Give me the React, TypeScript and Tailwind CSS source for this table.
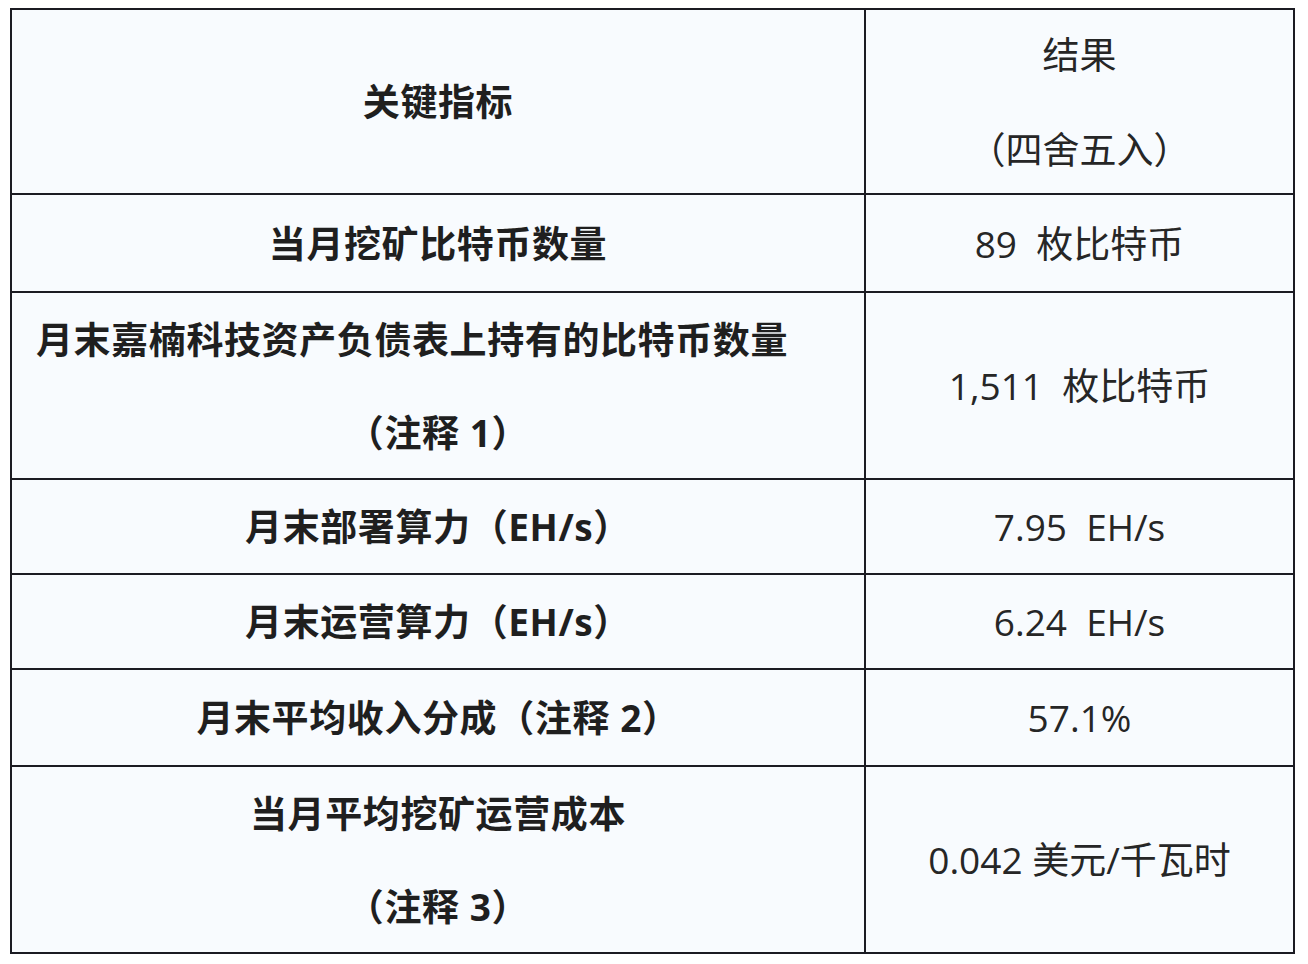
import React from "react";

interface Row {
	label: string[];
	value: string[];
	height: string;
	labelShift?: boolean;
}

const rows: Row[] = [
	{ label: ["关键指标"], value: ["结果", "（四舍五入）"], height: "h-[185px]" },
	{ label: ["当月挖矿比特币数量"], value: ["89  枚比特币"], height: "h-[98px]" },
	{ label: ["月末嘉楠科技资产负债表上持有的比特币数量", "（注释 1）"], value: ["1,511  枚比特币"], height: "h-[187px]", labelShift: true },
	{ label: ["月末部署算力（EH/s）"], value: ["7.95  EH/s"], height: "h-[95px]" },
	{ label: ["月末运营算力（EH/s）"], value: ["6.24  EH/s"], height: "h-[95px]" },
	{ label: ["月末平均收入分成（注释 2）"], value: ["57.1%"], height: "h-[97px]" },
	{ label: ["当月平均挖矿运营成本", "（注释 3）"], value: ["0.042 美元/千瓦时"], height: "h-[185px]" },
];

export default function App() {
	return (
		<div className="min-h-[964px] w-[1308px] bg-white pt-[8px] pl-[10px]" style={{ fontFamily: '"Open Sans", "Noto Sans CJK SC", sans-serif' }}>
			<div className="grid w-[1285px] grid-cols-[854px_1fr] border-2 border-[#1b1b22] bg-[#f8fbfe] text-[37px] text-[#1f1f1f]">
				{rows.map((row, i) => {
					const last = i === rows.length - 1;
					return (
						<React.Fragment key={i}>
							<div className={`${row.height} flex flex-col items-center justify-center border-r-2 border-[#1b1b22] ${last ? "" : "border-b-2"} font-bold tracking-[0.6px]`}>
								{row.label.map((line, j) => (
									<div key={j} className={`leading-[93px] whitespace-pre ${row.labelShift && j === 0 ? "pr-[52px]" : ""}`}>
										{line}
									</div>
								))}
							</div>
							<div className={`${row.height} flex flex-col items-center justify-center border-[#1b1b22] ${last ? "" : "border-b-2"} font-normal text-[#262626]`}>
								{row.value.map((line, j) => (
									<div key={j} className="leading-[95px] whitespace-pre">
										{line}
									</div>
								))}
							</div>
						</React.Fragment>
					);
				})}
			</div>
		</div>
	);
}
